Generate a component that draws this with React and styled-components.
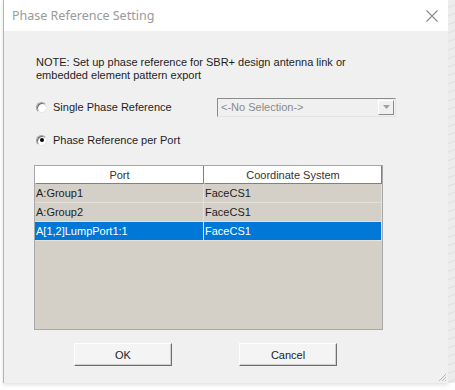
import React, { useState } from "react"
import styled, { createGlobalStyle } from "styled-components"

const GlobalStyle = createGlobalStyle`
	html, body {
		margin: 0;
		padding: 0;
		background: #ffffff;
	}
	body {
		font-family: "Liberation Sans", Arial, sans-serif;
	}
`

const ports = [
	{ port: "A:Group1", cs: "FaceCS1" },
	{ port: "A:Group2", cs: "FaceCS1" },
	{ port: "A[1,2]LumpPort1:1", cs: "FaceCS1" },
]

const App = () => {
	const [mode, setMode] = useState("perPort")
	const [selected, setSelected] = useState(2)

	return (
		<>
			<GlobalStyle />
			<Screen>
				<LeftGap />
				<Dialog>
					<TitleBar>
						<Title>Phase Reference Setting</Title>
						<CloseButton aria-label="Close">
							<svg width="12" height="12" viewBox="0 0 12 12">
								<path d="M0.5 0.5 L11.5 11.5 M11.5 0.5 L0.5 11.5" stroke="#8a8a8a" strokeWidth="1.1" fill="none" />
							</svg>
						</CloseButton>
					</TitleBar>
					<Body>
						<Note>
							NOTE: Set up phase reference for SBR+ design antenna link or<br />
							embedded element pattern export
						</Note>
						<OptionRow>
							<RadioLabel onClick={() => setMode("single")}>
								<Radio $checked={mode === "single"} />
								Single Phase Reference
							</RadioLabel>
							<Combo>
								<ComboText>&lt;-No Selection-&gt;</ComboText>
								<ComboArrow>
									<svg width="7" height="4" viewBox="0 0 7 4">
										<path d="M0 0 L7 0 L3.5 4 Z" fill="#a0a0a0" />
									</svg>
								</ComboArrow>
							</Combo>
						</OptionRow>
						<OptionRow $second>
							<RadioLabel onClick={() => setMode("perPort")}>
								<Radio $checked={mode === "perPort"} />
								Phase Reference per Port
							</RadioLabel>
						</OptionRow>
						<Table>
							<HeaderRow>
								<HeaderCell $w={169}>Port</HeaderCell>
								<HeaderCell $grow>Coordinate System</HeaderCell>
							</HeaderRow>
							{ports.map((p, i) => (
								<Row key={p.port} $selected={selected === i} onClick={() => setSelected(i)}>
									<Cell $w={169}>{p.port}</Cell>
									<Cell $grow>{p.cs}</Cell>
								</Row>
							))}
						</Table>
						<Buttons>
							<Button>OK</Button>
							<Button>Cancel</Button>
						</Buttons>
						<Grip>
							<svg width="10" height="10" viewBox="0 0 10 10">
								<path d="M9 2 L2 9 M9 5 L5 9 M9 8 L8 9" stroke="#b8b8b8" strokeWidth="1" fill="none" />
							</svg>
						</Grip>
					</Body>
				</Dialog>
				<RightGap />
			</Screen>
			<Below />
		</>
	)
}

const Screen = styled.div`
	display: flex;
	height: 383px;
`

const LeftGap = styled.div`
	width: 3px;
	background: #ffffff;
`

const RightGap = styled.div`
	width: 7px;
	background: repeating-linear-gradient(160deg, #ececec 0px, #ececec 6px, #dedede 7px, #ececec 8px);
`

const Below = styled.div`
	height: 7px;
	background: #ffffff;
`

const Dialog = styled.div`
	width: 445px;
	display: flex;
	flex-direction: column;
	border-left: 1px solid #b4b4b4;
	box-sizing: border-box;
	box-shadow: 0 2px 4px rgba(0, 0, 0, 0.12);
`

const TitleBar = styled.div`
	height: 31px;
	background: #ffffff;
	display: flex;
	align-items: center;
	justify-content: space-between;
	padding: 0 10px 0 8px;
`

const Title = styled.div`
	font-family: "Noto Sans", "Open Sans", sans-serif;
	font-size: 12.5px;
	color: #9a9a9a;
	margin-top: -1px;
`

const CloseButton = styled.div`
	display: flex;
	align-items: center;
`

const Body = styled.div`
	flex: 1;
	background: #f0f0f0;
	position: relative;
	padding: 25px 0 0 32px;
	font-size: 11px;
	color: #1e1e1e;
`

const Note = styled.div`
	line-height: 13px;
	margin-bottom: 15px;
`

const OptionRow = styled.div`
	display: flex;
	align-items: center;
	height: 20px;
	margin-top: ${props => props.$second ? "13px" : "0"};
`

const RadioLabel = styled.label`
	display: flex;
	align-items: center;
	width: 181px;
	cursor: default;
`

const Radio = styled.span`
	width: 11px;
	height: 11px;
	border-radius: 50%;
	margin: 0 6px 0 0;
	box-sizing: border-box;
	background: #ffffff;
	border: 1px solid;
	border-color: #a0a0a0 #e8e8e8 #e8e8e8 #a0a0a0;
	box-shadow: inset 1px 1px 0 #6a6a6a;
	display: flex;
	align-items: center;
	justify-content: center;

	&::after {
		content: "";
		width: 4px;
		height: 4px;
		border-radius: 50%;
		background: ${props => props.$checked ? "#000" : "transparent"};
	}
`

const Combo = styled.div`
	width: 179px;
	height: 19px;
	box-sizing: border-box;
	border: 1px solid;
	border-color: #8c8c8c #e4e4e4 #e4e4e4 #8c8c8c;
	background: #f0f0f0;
	display: flex;
	align-items: center;
	justify-content: space-between;
`

const ComboText = styled.span`
	color: #8a8a8a;
	padding-left: 3px;
`

const ComboArrow = styled.span`
	width: 16px;
	height: 15px;
	margin-right: 1px;
	box-sizing: border-box;
	border: 1px solid;
	border-color: #ffffff #8c8c8c #8c8c8c #ffffff;
	display: flex;
	align-items: center;
	justify-content: center;
`

const Table = styled.div`
	margin-top: 15px;
	margin-left: -2px;
	width: 349px;
	height: 165px;
	box-sizing: border-box;
	border: 1px solid #a8a8a8;
	background: #d4d0c8;
`

const HeaderRow = styled.div`
	display: flex;
	height: 18px;
	background: #ffffff;
`

const HeaderCell = styled.div`
	width: ${props => props.$grow ? "auto" : props.$w + "px"};
	flex: ${props => props.$grow ? 1 : "none"};
	box-sizing: border-box;
	border-right: 1px solid #808080;
	border-bottom: 1px solid #808080;
	border-left: 1px solid #ffffff;
	display: flex;
	align-items: center;
	justify-content: center;
	color: #333;
`

const Row = styled.div`
	display: flex;
	height: 18px;
	background: ${props => props.$selected ? "#0078d7" : "#d4d0c8"};
	color: ${props => props.$selected ? "#ffffff" : "#1e1e1e"};
	border-bottom: 1px solid #e4e1da;
`

const Cell = styled.div`
	width: ${props => props.$grow ? "auto" : props.$w + "px"};
	flex: ${props => props.$grow ? 1 : "none"};
	box-sizing: border-box;
	border-right: 1px solid #e4e1da;
	padding-left: 1px;
	display: flex;
	align-items: center;
	white-space: nowrap;
`

const Buttons = styled.div`
	display: flex;
	gap: 67px;
	margin: 13px 0 0 38px;
`

const Button = styled.button`
	width: 98px;
	height: 23px;
	font-family: "Liberation Sans", Arial, sans-serif;
	font-size: 11px;
	color: #222;
	background: #f4f4f4;
	border: 1px solid;
	border-color: #ffffff #6e6e6e #6e6e6e #ffffff;
	box-shadow: inset -1px -1px 0 #d0d0d0;
	padding: 0;
`

const Grip = styled.div`
	position: absolute;
	right: 1px;
	bottom: 1px;
	width: 10px;
	height: 10px;
`

export default App
